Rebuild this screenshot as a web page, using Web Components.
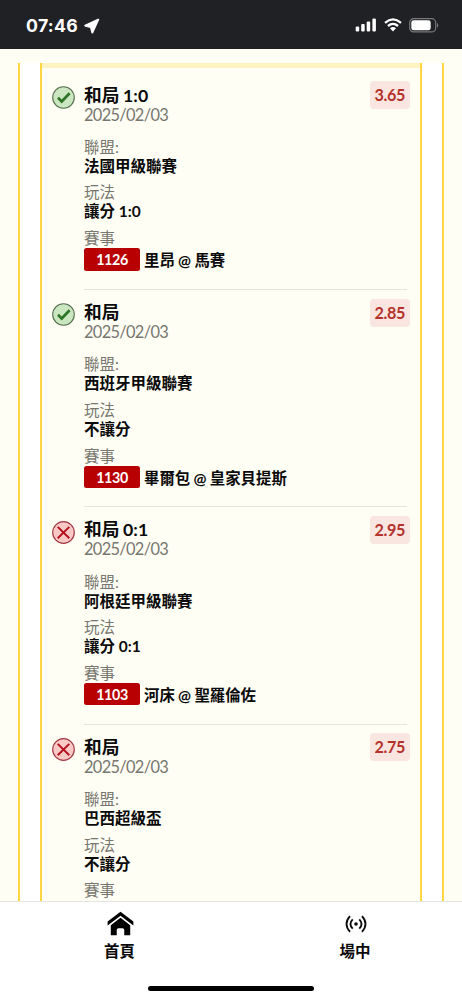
<!DOCTYPE html>
<html lang="zh-Hant">
<head>
<meta charset="utf-8">
<title>賽事</title>
<style>
html,body{margin:0;height:100%;overflow:hidden}
body{font-family:Lato,"Noto Sans CJK TC",sans-serif;background:#fffef5;color:#0b0b0b}
</style>
</head>
<body>
<bet-app></bet-app>
<script>
const define=(name,html,setup)=>customElements.define(name,class extends HTMLElement{
  connectedCallback(){
    if(this.shadowRoot)return;
    this.attachShadow({mode:'open'}).innerHTML=html;
    if(setup)setup(this);
  }
});

define('status-bar',`<style>
:host{display:flex;justify-content:space-between;box-sizing:border-box;height:49px;flex:none;background:#202125;color:#fff;padding:1px 24px 0 26px;align-items:center;font:700 17.7px/20px Inter,sans-serif}
.l,.r{display:flex;align-items:center}
.l{gap:6px;padding-top:1px}.l span{letter-spacing:.3px}
svg{display:block}
</style>
<div class="l"><span>07:46</span><svg width="16" height="16" viewBox="0 0 16 16"><path d="M14.200 1.700 1.300 7.700 6.900 9 8.300 14.500z" fill="#fff" stroke="#fff" stroke-width="2" stroke-linejoin="round"/></svg></div>
<div class="r">
<svg width="22" height="14" viewBox="0 0 22 14" fill="#fff"><rect x=".7" y="8.500" width="3.500" height="5" rx="1.100"/><rect x="6.200" y="6" width="3.500" height="7.500" rx="1.100"/><rect x="11.700" y="3.500" width="3.500" height="10" rx="1.100"/><rect x="17.400" y=".4" width="3.500" height="13.100" rx="1.100"/></svg>
<svg style="margin-left:7px" width="18" height="14" viewBox="0 0 18 14"><g fill="none" stroke="#fff" stroke-width="2.300"><path d="M1 4.800q8-6.800 16 0"/><path d="M4 8q5-4.200 10 0"/></g><path d="M6 10.300q3-2.500 6 0L9 13.400z" fill="#fff"/></svg>
<svg style="margin-left:7px;margin-right:-1px" width="30" height="15" viewBox="0 0 30 15"><rect x=".7" y=".7" width="26" height="13.200" rx="4" fill="none" stroke="#77787b" stroke-width="1.200"/><rect x="2.300" y="2.300" width="19.400" height="10" rx="2.400" fill="#fff"/><path d="M28 4.800q2.500 2.500 0 5z" fill="#77787b"/></svg>
</div>`);

define('result-icon',`<style>:host{display:block;width:23px;height:23px}svg{display:block}</style><div></div>`,el=>{
  const win=el.getAttribute('kind')==='win';
  el.shadowRoot.querySelector('div').innerHTML=win
  ?`<svg width="23" height="23" viewBox="0 0 23 23"><circle cx="11.500" cy="11.500" r="10.800" fill="#cbe7c2" stroke="#56704f" stroke-width="1.100"/><path d="m6 11.800 3.700 3.700 7.900-8.200" fill="none" stroke="#2e7426" stroke-width="2.700"/></svg>`
  :`<svg width="23" height="23" viewBox="0 0 23 23"><circle cx="11.500" cy="11.500" r="10.800" fill="#fbc9c5" stroke="#a23a45" stroke-width="1.200"/><path d="m5.700 5.900 11.600 11.400M17.300 5.900 5.700 17.300" fill="none" stroke="#b3101c" stroke-width="1.900"/></svg>`;
});

define('odds-badge',`<style>:host{display:block;box-sizing:border-box;width:40px;height:28px;border-radius:4px;background:#f9e6e0;color:#b5312c;font-weight:700;font-size:16.200px;letter-spacing:-.4px;line-height:28px;text-align:center}</style><slot></slot>`);
define('match-number',`<style>:host{display:block;width:56px;height:22.500px;border-radius:2.500px;background:#b80003;color:#fff;font-weight:700;font-size:14.300px;letter-spacing:-.4px;line-height:23px;text-align:center}</style><slot></slot>`);

define('info-field',`<style>
:host{display:block;margin-bottom:7.700px;font-size:15.500px;line-height:19px}
.k{color:#77766f;font-weight:400}.v{color:#0b0b0b;font-weight:700}
</style><div class="k"><slot name="label"></slot></div><div class="v"><slot></slot></div>`);

define('bet-item',`<style>
:host{display:grid;grid-template-columns:42px 1fr;box-sizing:border-box;height:217.400px;flex:none;padding:0 13px 0 0}
result-icon{margin:13.600px 0 0 10px}
.body{border-bottom:1px solid #e6e4dc;box-sizing:border-box;padding-top:13px}
.head{display:flex;justify-content:space-between;height:52.300px}
.title{font-weight:700;font-size:17.700px;line-height:20px;white-space:nowrap;word-spacing:-.6px}
.date{color:#77766f;font-size:16.400px;letter-spacing:-.68px;line-height:17.500px}
odds-badge{margin:-4.400px -2.700px 0 0}
.label{font-size:15.500px;line-height:19px;color:#77766f}
.match{display:flex;gap:4px;font-weight:700;font-size:15.400px;line-height:24px;white-space:nowrap}
.teams{word-spacing:-.4px}
</style>
<result-icon></result-icon>
<div class="body"><div class="head"><div><div class="title"></div><div class="date">2025/02/03</div></div><odds-badge></odds-badge></div>
<info-field><span slot="label">聯盟:</span><span class="league"></span></info-field>
<info-field><span slot="label">玩法</span><span class="play"></span></info-field>
<div class="label">賽事</div>
<div class="match"><match-number></match-number><span class="teams"></span></div></div>`,el=>{
  const s=el.shadowRoot;
  s.querySelector('.title').textContent=el.getAttribute('pick');
  s.querySelector('odds-badge').textContent=el.getAttribute('odds');
  s.querySelector('.league').textContent=el.getAttribute('league');
  s.querySelector('.play').textContent=el.getAttribute('play');
  const no=el.getAttribute('no');
  if(no){s.querySelector('match-number').textContent=no;s.querySelector('.teams').textContent=el.getAttribute('teams');}
  else s.querySelector('.match').remove();
  const icon=document.createElement('result-icon');
  icon.setAttribute('kind',el.getAttribute('kind'));
  s.querySelector('result-icon').replaceWith(icon);
});

define('bet-card',`<style>
:host{display:block;flex:1;min-height:0;overflow:hidden;box-sizing:border-box;padding:14px 18px 0;background:#fffef5}
.outer{height:100%;box-sizing:border-box;border:solid #fdd642;border-width:0 2px;background:#fff;padding:0 20px}
.inner{height:100%;box-sizing:border-box;border:solid #fdd642;border-width:0 2px;background:#fffef5}
.strip{height:4.500px;background:#fff3c4}
.list{padding-top:5px;display:flex;flex-direction:column}
</style><div class="outer"><div class="inner"><div class="strip"></div><div class="list"><slot></slot></div></div></div>`);

define('nav-item',`<style>
:host{display:flex;flex-direction:column;align-items:center;color:#0b0b0b;font-weight:700;font-size:15.500px;line-height:20px}
.i{height:38px;display:flex;align-items:center;padding-top:6px;box-sizing:border-box}
</style><div class="i"><slot name="icon"></slot></div><slot></slot>`);

define('bottom-nav',`<style>
:host{display:grid;grid-template-columns:1fr 1fr;box-sizing:border-box;height:99px;flex:none;border-top:1px solid #e4e4e2;background:#fff;position:relative}
svg{display:block;margin-top:-3px}
nav-item{margin-top:1px}
nav-item:first-of-type{margin-left:8px}nav-item:last-of-type{margin-left:17px}
.home{position:absolute;left:148px;bottom:9px;width:166px;height:5.500px;border-radius:3px;background:#000}
</style>
<nav-item><svg slot="icon" style="margin-left:2px" width="27" height="25" viewBox="0 0 28 26" fill="#000"><path d="M14 .7 .6 11v4.200L14 4.900 27.400 15.200V11z"/><path d="M14 7 3.900 14.700V25.200h6.200v-5.500q0-1.800 1.800-1.800h4.200q1.800 0 1.800 1.800v5.500h6.200V14.700z"/></svg>首頁</nav-item>
<nav-item><svg slot="icon" style="margin-left:2px" width="22" height="18" viewBox="0 0 22 18" fill="none" stroke="#0b0b0b" stroke-width="1.800"><path d="M5 1.200q-7 7.800 0 15.600M17 1.200q7 7.800 0 15.600M7.700 4.400q-4.500 4.600 0 9.200M14.300 4.400q4.500 4.600 0 9.200"/><circle cx="11" cy="9" r="1.800" fill="#0b0b0b" stroke="none"/></svg>場中</nav-item>
<div class="home"></div>`);

define('bet-app',`<style>:host{display:flex;flex-direction:column;height:1000px;width:462px;overflow:hidden}</style>
<status-bar></status-bar>
<bet-card>
<bet-item kind="win" pick="和局 1:0" odds="3.65" league="法國甲級聯賽" play="讓分 1:0" no="1126" teams="里昂 @ 馬賽"></bet-item>
<bet-item kind="win" pick="和局" odds="2.85" league="西班牙甲級聯賽" play="不讓分" no="1130" teams="畢爾包 @ 皇家貝提斯"></bet-item>
<bet-item kind="loss" pick="和局 0:1" odds="2.95" league="阿根廷甲級聯賽" play="讓分 0:1" no="1103" teams="河床 @ 聖羅倫佐"></bet-item>
<bet-item kind="loss" pick="和局" odds="2.75" league="巴西超級盃" play="不讓分"></bet-item>
</bet-card>
<bottom-nav></bottom-nav>`);
</script>
</body>
</html>
